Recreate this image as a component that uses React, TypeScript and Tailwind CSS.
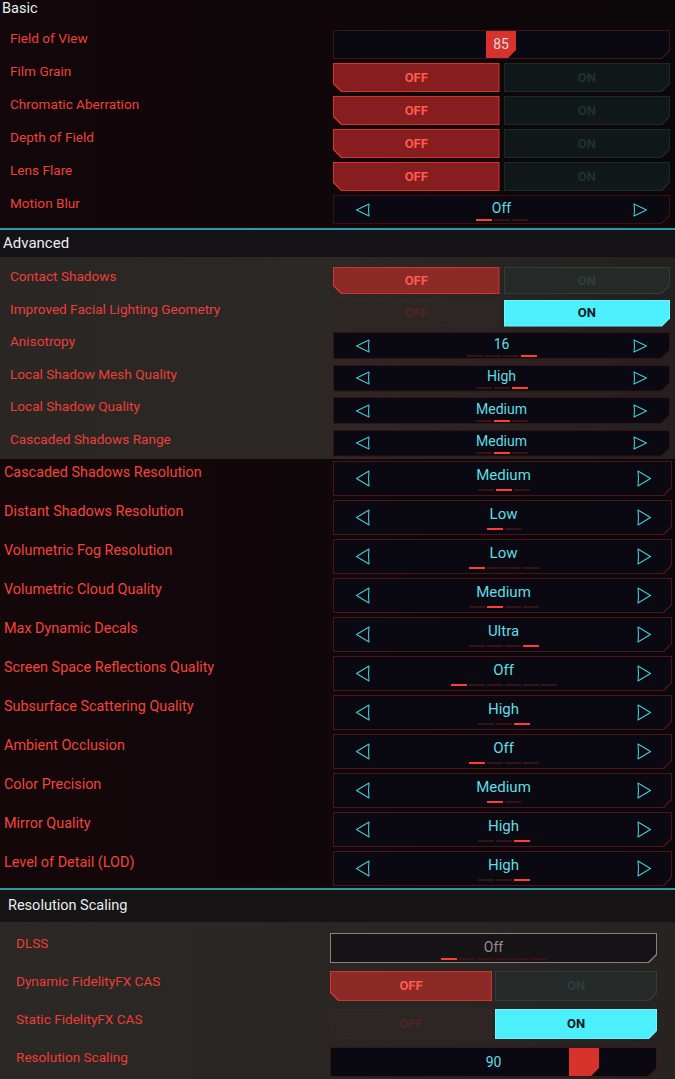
import type { ReactNode } from 'react';

const CUT_BR = '[clip-path:polygon(0_0,100%_0,100%_calc(100%_-_8px),calc(100%_-_8px)_100%,0_100%)]';
const CUT_BL = '[clip-path:polygon(0_0,100%_0,100%_100%,8px_100%,0_calc(100%_-_8px))]';

const FONT = "[font-family:Roboto,'Open_Sans',sans-serif]";

function Frame({ border, fill, cut, className = '', children }: { border: string; fill: string; cut: string; className?: string; children?: ReactNode }) {
  return (
    <div className={`${border} ${cut} p-[1px] ${className}`}>
      <div className={`${fill} ${cut} relative flex h-full w-full items-center justify-center`}>{children}</div>
    </div>
  );
}

function ArrowLeft({ h }: { h: number }) {
  return (
    <svg width="16" height={h} viewBox={`0 0 16 ${h}`} fill="none" stroke="#45c9d3" strokeWidth="1.1">
      <path d={`M14 1 L1.5 ${h / 2} L14 ${h - 1} L13.5 ${h / 2} Z`} strokeLinejoin="round" />
    </svg>
  );
}

function ArrowRight({ h }: { h: number }) {
  return (
    <svg width="16" height={h} viewBox={`0 0 16 ${h}`} fill="none" stroke="#45c9d3" strokeWidth="1.1">
      <path d={`M2 1 L14.5 ${h / 2} L2 ${h - 1} L2.5 ${h / 2} Z`} strokeLinejoin="round" />
    </svg>
  );
}

function Dashes({ n, active }: { n: number; active: number }) {
  return (
    <div className="flex gap-[2px]">
      {Array.from({ length: n }).map((_, i) => (
        <div key={i} className={`h-[2px] w-[16px] ${i === active ? 'bg-[#ff3d36]' : 'bg-[#3a1216]'}`} />
      ))}
    </div>
  );
}

function Selector({ value, n, active, big = false }: { value: string; n: number; active: number; big?: boolean }) {
  return (
    <Frame border={big ? 'bg-[#4a141a]' : 'bg-[#3a1015]'} fill="bg-[#0a0911]" cut={CUT_BR} className="h-full w-full">
      <div className={`flex h-full w-full items-center justify-between ${big ? 'pl-[21px] pr-[19px]' : 'px-[21px]'}`}>
        <ArrowLeft h={big ? 17 : 14} />
        <div className={`flex flex-col items-center ${big ? 'pt-[1px]' : 'pt-[1px]'}`}>
          <span className={`${big ? 'text-[15px] leading-[17px]' : 'text-[14px] leading-[16px]'} text-[#5fdde6]`}>{value}</span>
          <div className={big ? 'mt-[5px]' : 'mt-[3px]'}>
            <Dashes n={n} active={active} />
          </div>
        </div>
        <ArrowRight h={big ? 17 : 14} />
      </div>
    </Frame>
  );
}

function Toggle({ on, grey = false, gap = 'gap-[4px]' }: { on: boolean; grey?: boolean; gap?: string }) {
  return (
    <div className={`flex h-full w-full ${gap}`}>
      {on ? (
        <Frame border="bg-[#342725]" fill="bg-[#2e2624]" cut={CUT_BL} className="h-full flex-1">
          <span className="text-[13px] font-bold text-[#4a2624]">OFF</span>
        </Frame>
      ) : (
        <Frame border="bg-[#d4332e]" fill={grey ? 'bg-[#8c2a28]' : 'bg-[#861d1e]'} cut={CUT_BL} className="h-full flex-1">
          <span className="text-[13px] font-bold text-[#ff5a4e]">OFF</span>
        </Frame>
      )}
      {on ? (
        <Frame border="bg-[#6ff5ff]" fill="bg-[#4cf0fd]" cut={CUT_BR} className="h-full flex-1">
          <span className="text-[13px] font-bold text-[#0b1820]">ON</span>
        </Frame>
      ) : (
        <Frame border={grey ? 'bg-[#333b3b]' : 'bg-[#1b292b]'} fill={grey ? 'bg-[#252a29]' : 'bg-[#111819]'} cut={CUT_BR} className="h-full flex-1">
          <span className={`text-[13px] font-bold ${grey ? 'text-[#2f3d3d]' : 'text-[#1f3133]'}`}>ON</span>
        </Frame>
      )}
    </div>
  );
}

function Slider({ value, left, cyan = false }: { value: string; left: number; cyan?: boolean }) {
  return (
    <Frame border="bg-[#3c1318]" fill="bg-[#0a0911]" cut={CUT_BR} className="h-full w-full">
      <div className={`absolute top-0 h-full w-[30px] bg-[#d8322d] ${CUT_BR} flex items-center justify-center`} style={{ left }}>
        {!cyan && <span className="text-[14px] text-[#dcdcdc]">{value}</span>}
      </div>
      {cyan && <span className="relative text-[14px] text-[#5fdde6]">{value}</span>}
    </Frame>
  );
}

function Row1({ label, children }: { label: string; children: ReactNode }) {
  return (
    <div className="flex h-[33px]">
      <div className="flex-1 pl-[10px] pt-[2px] text-[13.6px] leading-[16px] text-[#ee4138]">{label}</div>
      <div className="mr-[5px] mt-[2px] h-[29px] w-[337px]">{children}</div>
    </div>
  );
}

function Row2({ label, children }: { label: string; children: ReactNode }) {
  return (
    <div className="flex h-[32.5px]">
      <div className="flex-1 pl-[10px] pt-[4px] text-[13.6px] leading-[16px] text-[#ec3f37]">{label}</div>
      <div className="mr-[5px] mt-[3px] h-[27px] w-[337px]">{children}</div>
    </div>
  );
}

function Row3({ label, children }: { label: string; children: ReactNode }) {
  return (
    <div className="flex h-[39px]">
      <div className="flex-1 pl-[4px] pt-[5px] text-[14.4px] leading-[18px] text-[#f2443a]">{label}</div>
      <div className="mr-[3px] mt-[2px] h-[35px] w-[339px]">{children}</div>
    </div>
  );
}

function Row4({ label, children }: { label: string; children: ReactNode }) {
  return (
    <div className="flex h-[38px]">
      <div className="flex-1 pl-[16px] pt-[4px] text-[13.6px] leading-[16px] text-[#ec3d36]">{label}</div>
      <div className="mr-[18px] mt-[2px] h-[30px] w-[327px]">{children}</div>
    </div>
  );
}

const big: [string, string, number, number][] = [
  ['Cascaded Shadows Resolution', 'Medium', 3, 1],
  ['Distant Shadows Resolution', 'Low', 2, 0],
  ['Volumetric Fog Resolution', 'Low', 4, 0],
  ['Volumetric Cloud Quality', 'Medium', 4, 1],
  ['Max Dynamic Decals', 'Ultra', 4, 3],
  ['Screen Space Reflections Quality', 'Off', 6, 0],
  ['Subsurface Scattering Quality', 'High', 3, 2],
  ['Ambient Occlusion', 'Off', 4, 0],
  ['Color Precision', 'Medium', 2, 0],
  ['Mirror Quality', 'High', 3, 2],
  ['Level of Detail (LOD)', 'High', 3, 2],
];

export default function App() {
  return (
    <div className={`h-[1079px] w-[675px] overflow-hidden bg-[#0f080a] ${FONT}`}>
      {/* basic */}
      <div className="h-[228px] bg-gradient-to-r from-[#12070a] to-[#0c0709]">
        <div className="h-[28px] pl-[2px] pt-[1px] text-[14.5px] leading-[15px] text-[#e4eef2]">Basic</div>
        <Row1 label="Field of View">
          <Slider value="85" left={152} />
        </Row1>
        <Row1 label="Film Grain">
          <Toggle on={false} />
        </Row1>
        <Row1 label="Chromatic Aberration">
          <Toggle on={false} />
        </Row1>
        <Row1 label="Depth of Field">
          <Toggle on={false} />
        </Row1>
        <Row1 label="Lens Flare">
          <Toggle on={false} />
        </Row1>
        <Row1 label="Motion Blur">
          <Selector value="Off" n={3} active={0} />
        </Row1>
      </div>

      {/* advanced */}
      <div className="border-t-2 border-[#2a9aa3]">
        <div className="flex h-[27px] items-center bg-[#151217] pl-[3px] text-[15px] text-[#e8eef0]">Advanced</div>
        <div className="h-[202px] bg-gradient-to-r from-[#292624] via-[#2b2826] to-[#24201f] pt-[7px]">
          <Row2 label="Contact Shadows">
            <Toggle on={false} grey />
          </Row2>
          <Row2 label="Improved Facial Lighting Geometry">
            <Toggle on grey />
          </Row2>
          <Row2 label="Anisotropy">
            <Selector value="16" n={4} active={3} />
          </Row2>
          <Row2 label="Local Shadow Mesh Quality">
            <Selector value="High" n={3} active={2} />
          </Row2>
          <Row2 label="Local Shadow Quality">
            <Selector value="Medium" n={3} active={1} />
          </Row2>
          <Row2 label="Cascaded Shadows Range">
            <Selector value="Medium" n={3} active={1} />
          </Row2>
        </div>
      </div>

      {/* quality list */}
      <div className="h-[429px] bg-gradient-to-r from-[#14070a] to-[#0b070a]">
        {big.map(([label, value, n, active]) => (
          <Row3 key={label} label={label}>
            <Selector value={value} n={n} active={active} big />
          </Row3>
        ))}
      </div>

      {/* resolution scaling */}
      <div className="border-t-2 border-[#2a9aa3]">
        <div className="flex h-[32px] items-center bg-[#161415] pl-[8px] text-[14.5px] text-[#e8ecee]">Resolution Scaling</div>
        <div className="h-[200px] bg-gradient-to-r from-[#2b2826] to-[#262321] pt-[9px]">
          <Row4 label="DLSS">
            <Frame border="bg-[#8c7f7c]" fill="bg-[#151316]" cut={CUT_BR} className="h-full w-full">
              <div className="flex flex-col items-center pt-[3px]">
                <span className="text-[14px] leading-[16px] text-[#9a8d8b]">Off</span>
                <div className="mt-[3px]">
                  <Dashes n={6} active={0} />
                </div>
              </div>
            </Frame>
          </Row4>
          <Row4 label="Dynamic FidelityFX CAS">
            <Toggle on={false} grey gap="gap-[3px]" />
          </Row4>
          <Row4 label="Static FidelityFX CAS">
            <Toggle on grey gap="gap-[3px]" />
          </Row4>
          <Row4 label="Resolution Scaling">
            <Slider value="90" left={238} cyan />
          </Row4>
        </div>
      </div>
    </div>
  );
}
